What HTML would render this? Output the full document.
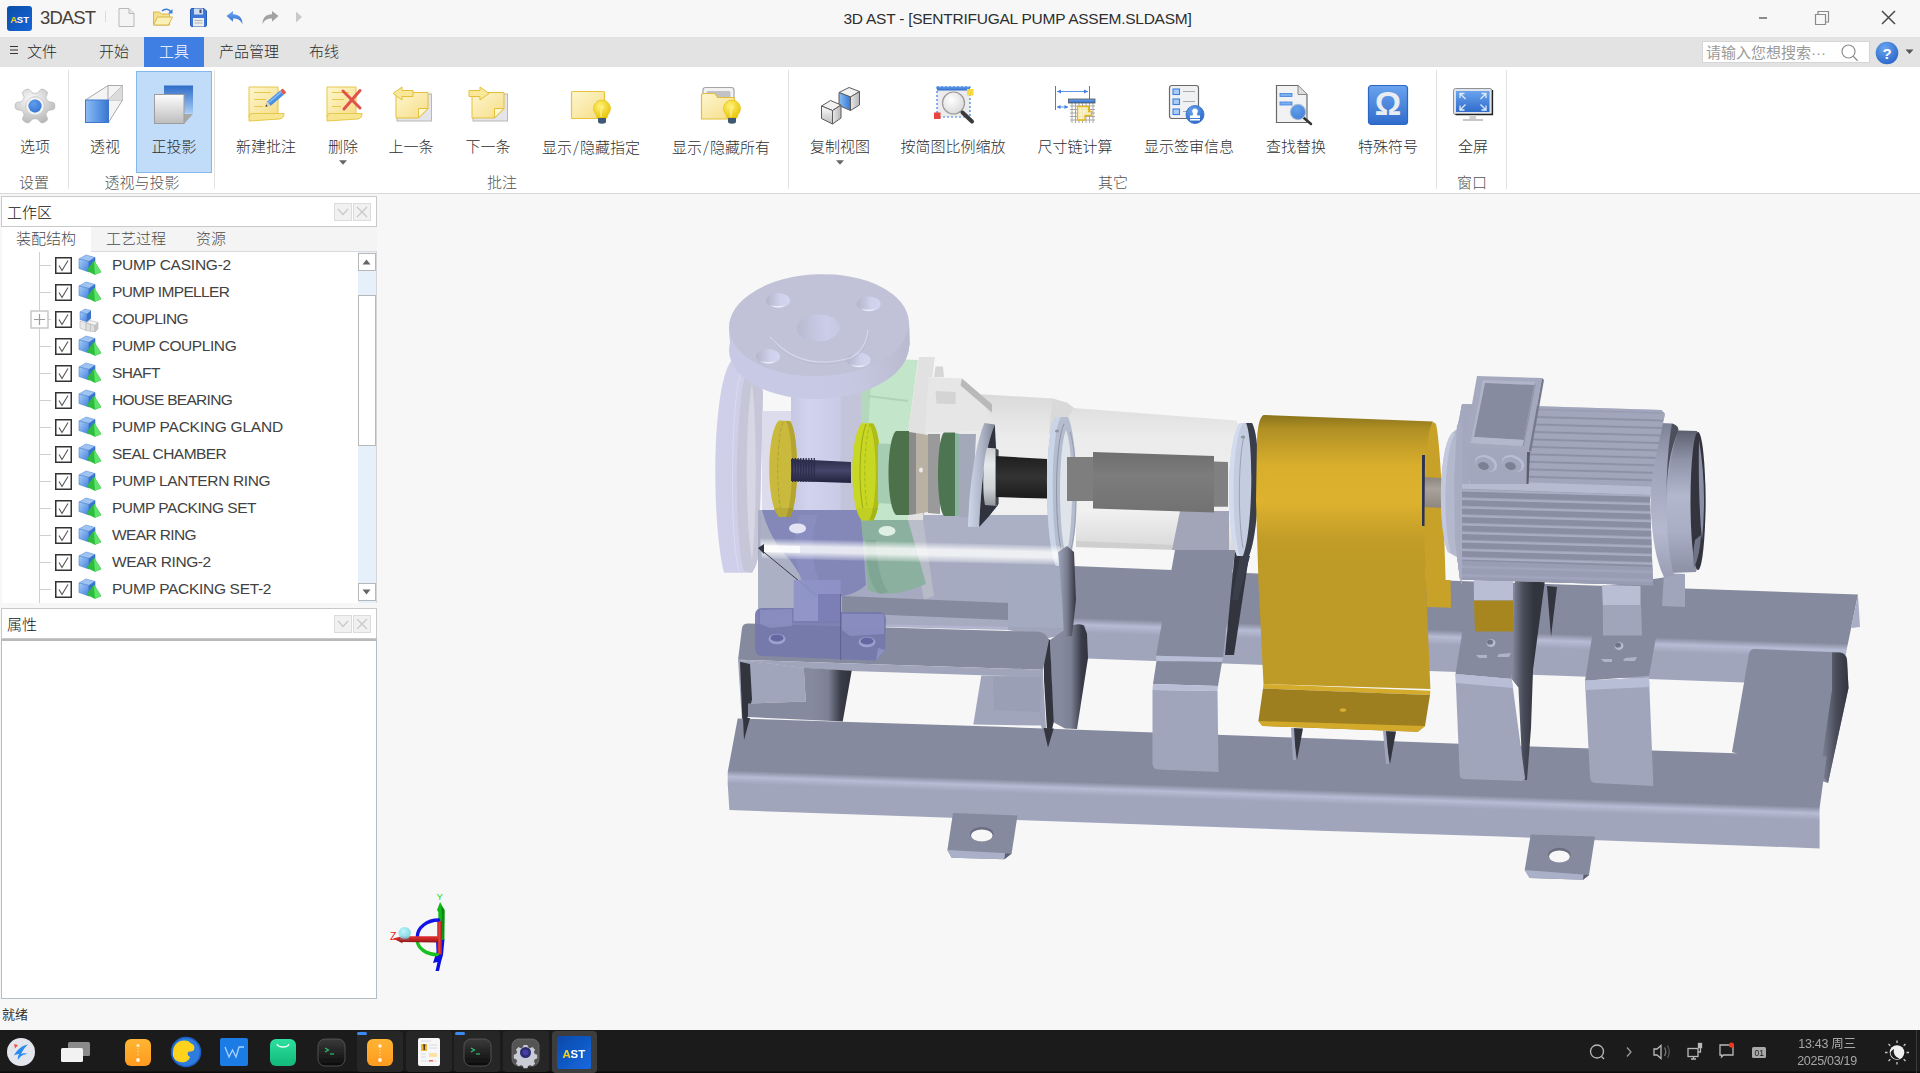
<!DOCTYPE html>
<html lang="zh-CN">
<head>
<meta charset="utf-8">
<title>3D AST - [SENTRIFUGAL PUMP ASSEM.SLDASM]</title>
<style>
*{box-sizing:border-box;margin:0;padding:0}
html,body{width:1920px;height:1073px;overflow:hidden;background:#f7f7f7}
body{font-family:"Liberation Sans","Noto Sans CJK SC",sans-serif;color:#333;position:relative;font-size:15px}
.abs{position:absolute}
#titlebar{left:0;top:0;width:1920px;height:37px;background:#f7f7f7}
#menubar{left:0;top:37px;width:1920px;height:30px;background:#e3e3e3}
#ribbon{left:0;top:67px;width:1920px;height:127px;background:#fff;border-bottom:1px solid #d9d9d9}
.tab{position:absolute;top:0;height:30px;line-height:30px;font-size:15px;font-weight:300;color:#2c2c2c;text-align:center;white-space:nowrap}
.tab.on{background:#3f7fe4;color:#fff}
.rb{position:absolute;top:77px;height:20px;line-height:20px;font-size:15px;font-weight:300;color:#2e2e2e;text-align:center;white-space:nowrap;transform:translateX(-50%)}
.grp{position:absolute;top:172.500px;height:20px;line-height:20px;font-size:15px;font-weight:300;color:#555;text-align:center;white-space:nowrap;transform:translateX(-50%)}
.sep{position:absolute;top:70px;width:1px;height:119px;background:#e2e2e2}
.ico{position:absolute}
#left{left:0;top:195px;width:378px;height:805px;background:#f7f7f7}
.ptitle{position:absolute;left:1px;width:376px;height:31px;background:#fff;border:1px solid #c9c9c9;font-size:15px;font-weight:300;line-height:31px;padding-left:5px;color:#111}
.pbtn{position:absolute;top:5px;width:17px;height:17px;background:#f1f1f1;border:1px solid #dcdcdc}
.trow{position:absolute;left:112px;height:27px;line-height:27px;font-size:15.5px;color:#424242;white-space:nowrap;letter-spacing:0px}
#view{left:378px;top:195px;width:1542px;height:805px;background:#f7f7f7;overflow:hidden}
#status{left:0;top:1000px;width:1920px;height:30px;background:#f7f7f7;font-size:13px;line-height:30px;padding-left:2px;color:#333}
#taskbar{left:0;top:1030px;width:1920px;height:43px;background:#1b1b1b}
</style>
</head>
<body>
<!-- ===== title bar ===== -->
<div id="titlebar" class="abs">
  <svg class="ico" style="left:7px;top:6px" width="25" height="25" viewBox="0 0 25 25">
    <defs><linearGradient id="lg0" x1="0" y1="0" x2="1" y2="1"><stop offset="0" stop-color="#0a4ea8"/><stop offset="1" stop-color="#1565d8"/></linearGradient></defs>
    <rect width="25" height="25" rx="3" fill="url(#lg0)"/>
    <text x="3.2" y="17" font-family="Liberation Sans,sans-serif" font-weight="bold" font-size="9.5" fill="#f7d21c">A</text>
    <text x="9.8" y="17" font-family="Liberation Sans,sans-serif" font-weight="bold" font-size="9.5" fill="#fff">ST</text>
  </svg>
  <div class="abs" style="left:40px;top:6px;font-size:18.500px;line-height:24px;color:#4a4038;letter-spacing:-0.9px">3DAST</div>
  <div class="abs" style="left:105px;top:11px;width:1px;height:11px;background:#dcdcdc"></div>
  <!-- new doc -->
  <svg class="ico" style="left:117px;top:7px" width="20" height="21" viewBox="0 0 20 21">
    <path d="M2 1.5h10l5 5v13H2z" fill="#f4f4f4" stroke="#b9b9b9"/><path d="M12 1.5v5h5" fill="#e6e6e6" stroke="#b9b9b9"/>
  </svg>
  <!-- open -->
  <svg class="ico" style="left:151px;top:7px" width="24" height="21" viewBox="0 0 24 21">
    <path d="M2.500 5h6l2 2h8v11h-16z" fill="#f5e08c" stroke="#d8b84e"/><path d="M2.500 18l4-8h15l-4 8z" fill="#fbf0b8" stroke="#d8b84e"/>
    <path d="M11 4c3-3 7-2 9 1" fill="none" stroke="#3d7fd6" stroke-width="1.5"/><path d="M21.5 2v4.5h-4.5z" fill="#3d7fd6"/>
  </svg>
  <!-- save -->
  <svg class="ico" style="left:189px;top:7px" width="19" height="21" viewBox="0 0 19 21">
    <path d="M1.5 3c0-1 .5-1.500 1.500-1.500h12l2.500 2.500v14c0 1-.5 1.500-1.500 1.500h-13c-1 0-1.500-.5-1.500-1.500z" fill="#3d78d8" stroke="#2a5cb6"/>
    <rect x="5" y="1.500" width="9" height="6" fill="#cfdcf2"/><rect x="10.500" y="2.500" width="2" height="3.500" fill="#3c4a66"/>
    <rect x="4" y="11" width="11" height="8.500" fill="#ededed"/><path d="M5.500 13.500h8M5.500 16h8" stroke="#b3b3b3"/>
  </svg>
  <!-- undo -->
  <svg class="ico" style="left:225px;top:9px" width="20" height="17" viewBox="0 0 20 17">
    <defs><linearGradient id="gUndo" x1="0" y1="0" x2="0" y2="1"><stop offset="0" stop-color="#6ea8f2"/><stop offset="1" stop-color="#2c68cc"/></linearGradient></defs><path d="M1.500 7L8 2v3.300c6 0 9.500 3.500 9.500 10c-2-4.300-4.500-5.800-9.500-5.800v3.300z" fill="url(#gUndo)"/>
  </svg>
  <!-- redo -->
  <svg class="ico" style="left:260px;top:9px" width="20" height="17" viewBox="0 0 20 17">
    <path d="M18.500 7L12 2v3.300c-6 0-9.500 3.500-9.500 10c2-4.300 4.500-5.800 9.500-5.800v3.300z" fill="#a2a2a2"/>
  </svg>
  <svg class="ico" style="left:295px;top:11px" width="8" height="12" viewBox="0 0 8 12"><path d="M1 0.500l6 5.500l-6 5.500z" fill="#c9c9c9"/></svg>
  <div class="abs" style="left:0;top:7px;width:2035px;text-align:center;font-size:15.500px;line-height:24px;color:#2e2e2e;letter-spacing:-0.25px">3D AST - [SENTRIFUGAL PUMP ASSEM.SLDASM]</div>
  <!-- window controls -->
  <div class="abs" style="left:1759px;top:17px;width:8px;height:1.500px;background:#8a8a8a"></div>
  <svg class="ico" style="left:1814px;top:10px" width="16" height="16" viewBox="0 0 16 16"><path d="M1.500 4.500h10v10h-10z" fill="none" stroke="#8a8a8a" stroke-width="1.200"/><path d="M4 4.500v-3h10.500v10.500h-3" fill="none" stroke="#8a8a8a" stroke-width="1.200"/></svg>
  <svg class="ico" style="left:1881px;top:10px" width="15" height="15" viewBox="0 0 15 15"><path d="M1 1l13 13M14 1l-13 13" stroke="#4a4a4a" stroke-width="1.500"/></svg>
</div>

<!-- ===== menu bar ===== -->
<div id="menubar" class="abs">
  <svg class="ico" style="left:9px;top:8px" width="10" height="10" viewBox="0 0 10 10"><path d="M1 1.500h8M1 5h8M1 8.500h8" stroke="#333" stroke-width="1.100"/></svg>
  <div class="tab" style="left:26px;width:32px;color:#1c1c1c">文件</div>
  <div class="tab" style="left:98px;width:32px">开始</div>
  <div class="tab on" style="left:144px;width:60px">工具</div>
  <div class="tab" style="left:218px;width:62px">产品管理</div>
  <div class="tab" style="left:308px;width:32px">布线</div>
  <div class="abs" style="left:1702px;top:4px;width:168px;height:22px;background:#fff;border:1px solid #d6d6d6;font-size:15px;line-height:21px;padding-left:3px;color:#9a9a9a;white-space:nowrap;overflow:hidden">请输入您想搜索···</div>
  <svg class="ico" style="left:1840px;top:6px" width="20" height="20" viewBox="0 0 20 20"><circle cx="8.500" cy="8.500" r="6.500" fill="none" stroke="#8d8d8d" stroke-width="1.200"/><path d="M13.200 13.200l4.500 4.500" stroke="#8d8d8d" stroke-width="1.300"/></svg>
  <svg class="ico" style="left:1875px;top:4px" width="24" height="24" viewBox="0 0 24 24">
    <defs><radialGradient id="rg1" cx="0.400" cy="0.300" r="0.800"><stop offset="0" stop-color="#6aa6f0"/><stop offset="1" stop-color="#2460c4"/></radialGradient></defs>
    <circle cx="12" cy="12" r="11.300" fill="url(#rg1)"/><text x="12" y="17.500" text-anchor="middle" font-family="Liberation Sans,sans-serif" font-weight="bold" font-size="15" fill="#fff">?</text>
  </svg>
  <svg class="ico" style="left:1905px;top:12px" width="9" height="6" viewBox="0 0 9 6"><path d="M0.500 0.500h8l-4 4.500z" fill="#555"/></svg>
</div>
<!-- ===== ribbon ===== -->
<div id="ribbon" class="abs"></div>
<svg width="0" height="0" style="position:absolute">
  <defs>
    <linearGradient id="gNote" x1="0" y1="0" x2="1" y2="1"><stop offset="0" stop-color="#fdf6cf"/><stop offset="1" stop-color="#f6dd85"/></linearGradient>
    <linearGradient id="gGrey" x1="0" y1="0" x2="0" y2="1"><stop offset="0" stop-color="#fdfdfd"/><stop offset="1" stop-color="#bdbdbd"/></linearGradient>
    <linearGradient id="gGreyH" x1="0" y1="0" x2="1" y2="0"><stop offset="0" stop-color="#e9e9e9"/><stop offset="1" stop-color="#b5b5b5"/></linearGradient>
    <linearGradient id="gBlue" x1="0" y1="0" x2="1" y2="0"><stop offset="0" stop-color="#8ebcf2"/><stop offset="0.500" stop-color="#5f9be6"/><stop offset="1" stop-color="#3a75cf"/></linearGradient>
    <linearGradient id="gBlueV" x1="0" y1="0" x2="0" y2="1"><stop offset="0" stop-color="#2d6cc8"/><stop offset="1" stop-color="#a9cdf6"/></linearGradient>
    <linearGradient id="gBlueB" x1="0" y1="0" x2="0" y2="1"><stop offset="0" stop-color="#6aa3ee"/><stop offset="1" stop-color="#2f6ccb"/></linearGradient>
    <radialGradient id="gBulb" cx="0.400" cy="0.350" r="0.700"><stop offset="0" stop-color="#fff27a"/><stop offset="1" stop-color="#e8c400"/></radialGradient>
    <radialGradient id="gGear" cx="0.400" cy="0.300" r="0.900"><stop offset="0" stop-color="#fafafa"/><stop offset="1" stop-color="#a8a8a8"/></radialGradient>
    <radialGradient id="gLens" cx="0.400" cy="0.350" r="0.700"><stop offset="0" stop-color="#ffffff"/><stop offset="1" stop-color="#d9d9d9"/></radialGradient>
    <g id="bulb">
      <path d="M0 -12a8.500 8.500 0 0 1 8.500 8.500c0 4-3 5.500-3.500 9.500h-10c-.5-4-3.500-5.500-3.500-9.500a8.500 8.500 0 0 1 8.500-8.500z" fill="url(#gBulb)" stroke="#e3c010" stroke-width=".6"/>
      <path d="M-4 6h8v3.500a4 2.200 0 0 1-8 0z" fill="#3f5873"/>
      <path d="M1.500-6l-2.500 4v7" stroke="#fff8b0" stroke-width="1" fill="none"/>
    </g>
    <g id="note">
      <path d="M1 1h29v27h-27q-2 0-2 3z" fill="url(#gNote)" stroke="#e6c84a" stroke-width="1"/>
      <path d="M1 31q0-3.500 3.500-3.500h31.500q0 5-4.500 5.500l-30.500 2z" fill="#f8e58f" stroke="#e6c84a" stroke-width="1"/>
      <path d="M6 6.500h17M6 13.500h12M6 20.500h9" stroke="#e6c84a" stroke-width="1"/>
    </g>
    <path id="ddarrow" d="M0 0h7l-3.500 4z" fill="#666"/>
  </defs>
</svg>
<div class="abs" style="left:136px;top:71px;width:76px;height:102px;background:#c1dcf8;border:1px solid #84b8ee"></div>
<div class="sep" style="left:68px"></div><div class="sep" style="left:214px"></div><div class="sep" style="left:788px"></div><div class="sep" style="left:1436px"></div><div class="sep" style="left:1506px"></div>

<!-- gear -->
<svg class="ico" style="left:13px;top:85px" width="44" height="42" viewBox="-22 -21 44 42">
  <path id="gearp" fill="url(#gGear)" stroke="#b4b4b4" stroke-width=".7" stroke-linejoin="round" d="M19.8,0.0 L19.8,1.0 L19.6,1.9 L19.2,2.8 L18.2,3.6 L16.2,4.0 L14.2,4.3 L13.2,4.7 L12.7,5.3 L12.3,5.8 L12.0,6.4 L11.6,7.0 L11.2,7.6 L11.0,8.3 L11.1,9.3 L11.9,11.0 L12.5,12.9 L12.2,14.1 L11.6,14.8 L10.8,15.4 L9.9,15.9 L9.0,16.4 L8.0,16.7 L7.0,16.9 L5.8,16.5 L4.3,15.1 L3.1,13.6 L2.2,13.0 L1.5,12.9 L0.7,12.8 L0.0,12.8 L-0.7,12.8 L-1.5,12.9 L-2.2,13.0 L-3.1,13.6 L-4.3,15.1 L-5.8,16.5 L-7.0,16.9 L-8.0,16.7 L-9.0,16.4 L-9.9,15.9 L-10.8,15.4 L-11.6,14.8 L-12.2,14.1 L-12.5,12.9 L-11.9,11.0 L-11.1,9.3 L-11.0,8.3 L-11.2,7.6 L-11.6,7.0 L-12.0,6.4 L-12.3,5.8 L-12.7,5.3 L-13.2,4.7 L-14.2,4.3 L-16.2,4.0 L-18.2,3.6 L-19.2,2.8 L-19.6,1.9 L-19.8,1.0 L-19.8,0.0 L-19.8,-1.0 L-19.6,-1.9 L-19.2,-2.8 L-18.2,-3.6 L-16.2,-4.0 L-14.2,-4.3 L-13.2,-4.7 L-12.7,-5.3 L-12.3,-5.8 L-12.0,-6.4 L-11.6,-7.0 L-11.2,-7.6 L-11.0,-8.3 L-11.1,-9.3 L-11.9,-11.0 L-12.5,-12.9 L-12.2,-14.1 L-11.6,-14.8 L-10.8,-15.4 L-9.9,-15.9 L-9.0,-16.4 L-8.0,-16.7 L-7.0,-16.9 L-5.8,-16.5 L-4.3,-15.1 L-3.1,-13.6 L-2.2,-13.0 L-1.5,-12.9 L-0.7,-12.8 L-0.0,-12.8 L0.7,-12.8 L1.5,-12.9 L2.2,-13.0 L3.1,-13.6 L4.3,-15.1 L5.8,-16.5 L7.0,-16.9 L8.0,-16.7 L9.0,-16.4 L9.9,-15.9 L10.8,-15.4 L11.6,-14.8 L12.2,-14.1 L12.5,-12.9 L11.9,-11.0 L11.1,-9.3 L11.0,-8.3 L11.2,-7.6 L11.6,-7.0 L12.0,-6.4 L12.3,-5.8 L12.7,-5.3 L13.2,-4.7 L14.2,-4.3 L16.2,-4.0 L18.2,-3.6 L19.2,-2.8 L19.6,-1.9 L19.8,-1.0Z"/>
  <circle r="9.300" fill="#f2f2f2" stroke="#c4c4c4" stroke-width=".8"/>
  <circle r="6.500" fill="#4d8fe6"/><circle r="6.500" fill="url(#rg1)" opacity=".6"/>
</svg>
<!-- perspective -->
<svg class="ico" style="left:84px;top:84px" width="40" height="40" viewBox="0 0 40 40">
  <path d="M1.500 16L24 1.500H38.500V16L24.500 38.500H1.500z" fill="#f4f4f4" stroke="#a9a9a9" stroke-width="1"/>
  <path d="M24 1.500V16H38.500" fill="none" stroke="#a9a9a9"/><path d="M24 16L38.500 1.500" stroke="#a9a9a9"/>
  <path d="M24 16H38.500V1.500z" fill="#dcdcdc"/>
  <rect x="1.500" y="16" width="23" height="22.500" fill="url(#gBlue)" stroke="#3e78cc"/>
</svg>
<!-- ortho -->
<svg class="ico" style="left:153px;top:84px" width="42" height="42" viewBox="0 0 42 42">
  <rect x="11" y="1.500" width="29" height="28" fill="url(#gBlueV)"/>
  <path d="M31 30h9l-9 10z" fill="#a8a8a8"/>
  <rect x="1.500" y="10.500" width="29.500" height="29" fill="url(#gGrey)" stroke="#9d9d9d" stroke-width="1"/>
</svg>
<!-- new note -->
<svg class="ico" style="left:248px;top:86px" width="40" height="38" viewBox="0 0 40 38">
  <use href="#note"/>
  <g transform="translate(17.500,20.500) rotate(-40)"><path d="M0 0l4.500-2.800h17v5.600h-17z" fill="#4a90e2"/><path d="M0 0l4.500-2.800v5.600z" fill="#f0cfa0"/><path d="M0 0l1.800-1.100v2.200z" fill="#222"/><rect x="21.500" y="-2.800" width="3.500" height="5.600" rx="1.200" fill="#e8584d"/><path d="M4.500 -1h17" stroke="#86bbf5" stroke-width="1.500"/></g>
</svg>
<!-- delete -->
<svg class="ico" style="left:326px;top:86px" width="40" height="38" viewBox="0 0 40 38">
  <use href="#note"/>
  <path d="M17 5l17 17M34 4.500L18 23" stroke="#e2524c" stroke-width="3" stroke-linecap="round"/>
</svg>
<svg class="ico" style="left:339px;top:160px" width="8" height="5" viewBox="0 0 7 4"><use href="#ddarrow"/></svg>
<!-- prev -->
<svg class="ico" style="left:392px;top:86px" width="42" height="38" viewBox="0 0 42 38">
  <rect x="5" y="8" width="34.500" height="27" fill="#e3e5ea" stroke="#b8b8b8"/>
  <path d="M4 6.500h32v16l-9.500 9.500h-22.500z" fill="url(#gNote)" stroke="#e3bf3a" stroke-width="1"/>
  <path d="M26.500 32v-9.500h9.500z" fill="#fdf6cf" stroke="#e3bf3a"/>
  <path d="M1 7.500l9-6.500v3.500h11v6h-11v3.500z" fill="#fae89a" stroke="#e3bf3a"/>
</svg>
<!-- next -->
<svg class="ico" style="left:468px;top:86px" width="42" height="38" viewBox="0 0 42 38">
  <rect x="5" y="8" width="34.500" height="27" fill="#e3e5ea" stroke="#b8b8b8"/>
  <path d="M4 6.500h32v16l-9.500 9.500h-22.500z" fill="url(#gNote)" stroke="#e3bf3a" stroke-width="1"/>
  <path d="M26.500 32v-9.500h9.500z" fill="#fdf6cf" stroke="#e3bf3a"/>
  <path d="M21 7.500l-9-6.500v3.500h-11v6h11v3.500z" fill="#fae89a" stroke="#e3bf3a"/>
</svg>
<!-- show/hide specified -->
<svg class="ico" style="left:570px;top:86px" width="44" height="40" viewBox="0 0 44 40">
  <rect x="1.500" y="5.500" width="33" height="27" rx="1" fill="url(#gNote)" stroke="#e6c440" stroke-width="1.200"/>
  <use href="#bulb" x="32" y="26"/>
</svg>
<!-- show/hide all -->
<svg class="ico" style="left:700px;top:86px" width="44" height="40" viewBox="0 0 44 40">
  <rect x="3" y="1.500" width="31" height="20" rx="2.500" fill="#f2f2f2" stroke="#a5a5a5" stroke-width="1.200"/><rect x="6.500" y="5" width="24" height="8" rx="1.500" fill="#c2c2c6"/>
  <path d="M1.500 9.500q0-2 2-2h10q2 0 3 2l1 2h15.500q1.500 0 1.500 1.500v20h-33z" fill="url(#gNote)" stroke="#e0be3a" stroke-width="1.200"/>
  <use href="#bulb" x="32" y="26"/>
</svg>
<!-- copy view -->
<svg class="ico" style="left:820px;top:86px" width="42" height="40" viewBox="0 0 42 40">
  <g stroke="#5c5c5c" stroke-width="1" stroke-linejoin="round">
    <path d="M19 6.500l10-5l10.500 4l-9 5.500z" fill="#f2f2f2"/><path d="M19 6.500l11.500 4.500v13.500l-11.500-5z" fill="url(#gBlue)"/><path d="M30.500 11l9-5.500v13.500l-9 5.500z" fill="url(#gGreyH)"/>
    <path d="M1.500 20l9-5.500l10.500 4.500l-8.500 5.500z" fill="#f2f2f2"/><path d="M1.500 20l11 4.500v13.500l-11-5.500z" fill="url(#gGrey)"/><path d="M12.500 24.500l8.500-5.500v13l-8.500 6z" fill="url(#gGreyH)"/>
  </g>
</svg>
<svg class="ico" style="left:836px;top:160px" width="8" height="5" viewBox="0 0 7 4"><use href="#ddarrow"/></svg>
<!-- zoom by sketch scale -->
<svg class="ico" style="left:933px;top:85px" width="42" height="42" viewBox="0 0 42 42">
  <rect x="4" y="2" width="33" height="30" fill="#ececec"/>
  <rect x="4" y="1.500" width="33" height="4" fill="url(#gBlueB)"/>
  <rect x="4" y="2" width="33" height="30" fill="none" stroke="#3f7fe0" stroke-width="1.200" stroke-dasharray="2 2"/>
  <rect x="34" y="4" width="6.500" height="6.500" fill="#f6d840"/><rect x="1" y="27.500" width="6.500" height="6.500" fill="#e8453f"/>
  <circle cx="20.500" cy="18" r="11" fill="url(#gLens)" stroke="#9a9a9a" stroke-width="1.200"/>
  <path d="M29.500 27.500l9.500 9" stroke="#3a3a3a" stroke-width="4" stroke-linecap="round"/>
</svg>
<!-- dimension chain -->
<svg class="ico" style="left:1053px;top:85px" width="44" height="42" viewBox="0 0 44 42">
  <path d="M2.500 1v24M36.500 1v13" stroke="#3f7fe0" stroke-width="1"/><path d="M4 6.500h31M4 22h11" stroke="#5b95e8" stroke-width="1"/>
  <path d="M4 6.500l4-2v4zM35 6.500l-4-2v4zM4 22l3.500-2v4zM15 22l-3.500-2v4z" fill="#3f7fe0"/>
  <g stroke="#9f9f9f" stroke-width=".9"><path d="M17 21h25M17 24.500h25M17 28h25M17 31.500h25M17 35h25"/><path d="M19 18v20M22.500 18v20M26 18v20M29.500 18v20M33 18v20M36.500 18v20M40 18v20"/></g>
  <path d="M24.500 21.500h11v5h3v4h-6.500v4.500h-7.500z" fill="#fdf3c0" fill-opacity=".85" stroke="#e3b820" stroke-width="1.300"/>
  <rect x="15.500" y="14" width="26.500" height="4" fill="url(#gBlueB)" stroke="#555" stroke-width=".8"/>
</svg>
<!-- sign info -->
<svg class="ico" style="left:1168px;top:84px" width="40" height="42" viewBox="0 0 40 42">
  <rect x="1.500" y="1.500" width="29" height="33" rx="2.500" fill="#f0f1f3" stroke="#6a6a6a" stroke-width="1.200"/>
  <g fill="#a9cdf6" stroke="#3f7fe0" stroke-width="1.100"><rect x="5" y="5" width="6.500" height="5.500"/><rect x="5" y="15" width="6.500" height="5.500"/><rect x="5" y="25" width="6.500" height="5.500"/></g>
  <path d="M15 7.500h12M15 17.500h12M15 27.500h5" stroke="#aaa" stroke-width="1.200"/>
  <circle cx="27" cy="30.500" r="9" fill="url(#rg1)" stroke="#2e68c4" stroke-width=".8"/>
  <path d="M27 24.500a2.800 2.800 0 0 1 1.800 5l.7 2h2.500v2.500h-10v-2.500h2.500l.7-2a2.800 2.800 0 0 1 1.800-5zM22 35h10v1.500h-10z" fill="#fff"/>
</svg>
<!-- find replace -->
<svg class="ico" style="left:1275px;top:84px" width="40" height="42" viewBox="0 0 40 42">
  <path d="M1.500 1.500h21.500l9 9v28h-30.500z" fill="#f1f2f4" stroke="#6a6a6a" stroke-width="1.200"/><path d="M23 1.500v9h9" fill="#dcdcdc" stroke="#8a8a8a"/>
  <rect x="5" y="9.500" width="12" height="3" fill="#7fb0ee" stroke="#3f7fe0" stroke-width=".8"/><rect x="5" y="18" width="12" height="3" fill="#7fb0ee" stroke="#3f7fe0" stroke-width=".8"/>
  <path d="M29 34l7 6" stroke="#333" stroke-width="2.500" stroke-linecap="round"/>
  <circle cx="23" cy="28" r="7.500" fill="#5e9ae8" stroke="#b9c7da" stroke-width="1.500"/><circle cx="23" cy="28" r="7.500" fill="url(#rg1)" opacity=".5"/>
</svg>
<!-- omega -->
<svg class="ico" style="left:1367px;top:84px" width="42" height="42" viewBox="0 0 42 42">
  <rect x="1.500" y="1.500" width="39" height="39" rx="3" fill="url(#gBlueB)" stroke="#2c66c6" stroke-width="1.200"/>
  <text x="21" y="31" text-anchor="middle" font-family="Liberation Sans,sans-serif" font-weight="bold" font-size="33" fill="#e8ecf3">Ω</text>
</svg>
<!-- fullscreen -->
<svg class="ico" style="left:1452px;top:87px" width="42" height="36" viewBox="0 0 42 36">
  <rect x="1.500" y="1.500" width="38.500" height="26" rx="2" fill="#dfe3e8" stroke="#8d9399" stroke-width="1"/>
  <path d="M40.500 3v24.500h-37" fill="none" stroke="#222" stroke-width="1.300"/>
  <rect x="4" y="4" width="33.500" height="21" fill="url(#gBlueB)"/>
  <g stroke="#dfeaf8" stroke-width="1.300" fill="none"><path d="M13.500 12l-5-5M8 11v-4.500h4.500"/><path d="M28.500 12l5-5M34 11v-4.500h-4.500"/><path d="M13.500 17.500l-5 5M8 18.500v4.500h4.500"/><path d="M28.500 17.500l5 5M34 18.500v4.500h-4.500"/></g>
  <rect x="17.500" y="28" width="6.500" height="4" fill="#d0d0d0"/><rect x="11" y="32" width="20" height="2" fill="#c6c6c6"/>
</svg>

<div class="rb" style="left:35px;top:136.500px">选项</div>
<div class="rb" style="left:105px;top:136.500px">透视</div>
<div class="rb" style="left:174px;top:136.500px">正投影</div>
<div class="rb" style="left:266px;top:136.500px">新建批注</div>
<div class="rb" style="left:343px;top:136.500px">删除</div>
<div class="rb" style="left:411px;top:136.500px">上一条</div>
<div class="rb" style="left:488px;top:136.500px">下一条</div>
<div class="rb" style="left:591px;top:136.500px">显示<span style="font-family:'Noto Sans CJK SC',sans-serif;margin:0 1px">/</span>隐藏指定</div>
<div class="rb" style="left:721px;top:136.500px">显示<span style="font-family:'Noto Sans CJK SC',sans-serif;margin:0 1px">/</span>隐藏所有</div>
<div class="rb" style="left:840px;top:136.500px">复制视图</div>
<div class="rb" style="left:953px;top:136.500px">按简图比例缩放</div>
<div class="rb" style="left:1075px;top:136.500px">尺寸链计算</div>
<div class="rb" style="left:1189px;top:136.500px">显示签审信息</div>
<div class="rb" style="left:1296px;top:136.500px">查找替换</div>
<div class="rb" style="left:1388px;top:136.500px">特殊符号</div>
<div class="rb" style="left:1473px;top:136.500px">全屏</div>
<div class="grp" style="left:34px">设置</div>
<div class="grp" style="left:142px">透视与投影</div>
<div class="grp" style="left:502px">批注</div>
<div class="grp" style="left:1113px">其它</div>
<div class="grp" style="left:1472px">窗口</div>
<!-- ===== left panel ===== -->
<div id="left" class="abs"></div>
<svg width="0" height="0" style="position:absolute"><defs>
<linearGradient id="cubeF" x1="0" y1="0" x2="1" y2="1"><stop offset="0" stop-color="#a9cdf7"/><stop offset="1" stop-color="#3f7fdc"/></linearGradient>
<g id="part">
  <path d="M1 5l7-4l9 2.500l-6 4z" fill="#9fc4f1" stroke="#5b8fd6" stroke-width=".6"/>
  <path d="M1 5l10 2.500v10.500l-10-3.500z" fill="url(#cubeF)" stroke="#4d84d2" stroke-width=".6"/>
  <path d="M11 7.500l6-4v10l-6 4.500z" fill="#3a73cc" stroke="#3a73cc" stroke-width=".6"/>
  <path d="M16 7l7 11l-6 2.500l-8-4z" fill="#39d24a" stroke="#24b136" stroke-width=".6"/>
  <path d="M16 7l1 13.500l-8-4z" fill="#2ebc3f"/>
  <path d="M16 7l7 11l-6 2.500z" fill="#5fe36a"/>
</g>
<g id="asm">
  <path d="M2 4l5-3l6 1.500l-4 3.500z" fill="#9fc4f1" stroke="#5b8fd6" stroke-width=".5"/>
  <path d="M2 4l7 2v8l-7-2.500z" fill="url(#cubeF)" stroke="#4d84d2" stroke-width=".5"/>
  <path d="M9 6l4-3.500v8l-4 3.500z" fill="#3a73cc"/>
  <path d="M2 13l6 2v7.500l-6-2.500z" fill="#e9e9e9" stroke="#b5b5b5" stroke-width=".6"/>
  <path d="M8 15l4-2.500l8 2l-3 3z" fill="#f4f4f4" stroke="#b5b5b5" stroke-width=".6"/>
  <path d="M8 15l9 2.500v6.500l-9-1.500z" fill="#dedede" stroke="#b5b5b5" stroke-width=".6"/>
  <path d="M17 17.500l3-3v6.500l-3 3z" fill="#c6c6c6" stroke="#b5b5b5" stroke-width=".6"/>
  <path d="M12.500 16.200v6.800" stroke="#b5b5b5" stroke-width=".6"/>
</g>
<g id="chk"><rect x=".75" y=".75" width="15.500" height="15.500" fill="#fff" stroke="#333" stroke-width="1.500"/><path d="M4 8.500l3 5l6-10" fill="none" stroke="#555" stroke-width="1.100"/></g>
<g id="pbx"><rect x=".5" y=".5" width="17" height="17" fill="#f1f1f1" stroke="#dcdcdc"/></g>
</defs></svg>
<div class="ptitle" style="top:196px">工作区</div>
<svg class="ico" style="left:334px;top:203px" width="37" height="18" viewBox="0 0 37 18"><use href="#pbx"/><use href="#pbx" x="19"/><path d="M4 6l5 5.500l5-5.500" fill="none" stroke="#c8c8c8" stroke-width="1.200"/><path d="M23 4l10 10M33 4l-10 10" stroke="#c8c8c8" stroke-width="1.200"/></svg>
<div class="abs" style="left:2px;top:227px;width:375px;height:25px;background:#f4f4f4;border-bottom:1px solid #dadada"></div>
<div class="abs" style="left:2px;top:227px;width:89px;height:25px;background:#fff"></div>
<div class="abs" style="left:46px;top:229px;transform:translateX(-50%);font-size:15px;font-weight:300;line-height:20px;color:#4a4a4a;white-space:nowrap">装配结构</div>
<div class="abs" style="left:136px;top:229px;transform:translateX(-50%);font-size:15px;font-weight:300;line-height:20px;color:#4a4a4a;white-space:nowrap">工艺过程</div>
<div class="abs" style="left:211px;top:229px;transform:translateX(-50%);font-size:15px;font-weight:300;line-height:20px;color:#4a4a4a;white-space:nowrap">资源</div>
<div class="abs" style="left:2px;top:252px;width:375px;height:351px;background:#fff;border-right:1px solid #d5d5d5;overflow:hidden"></div>
<div class="abs" style="left:39px;top:252px;width:1px;height:351px;background:#cfcfcf"></div>
<div class="abs" style="left:39px;top:265px;width:12px;height:1px;background:#cfcfcf"></div>
<svg class="ico" style="left:55px;top:257px" width="17" height="17"><use href="#chk"/></svg>
<svg class="ico" style="left:78px;top:254px" width="24" height="24" viewBox="0 0 24 24"><use href="#part"/></svg>
<div class="trow" style="top:251px;letter-spacing:-0.231px">PUMP CASING-2</div>
<div class="abs" style="left:39px;top:292px;width:12px;height:1px;background:#cfcfcf"></div>
<svg class="ico" style="left:55px;top:284px" width="17" height="17"><use href="#chk"/></svg>
<svg class="ico" style="left:78px;top:281px" width="24" height="24" viewBox="0 0 24 24"><use href="#part"/></svg>
<div class="trow" style="top:278px;letter-spacing:-0.623px">PUMP IMPELLER</div>
<div class="abs" style="left:39px;top:319px;width:12px;height:1px;background:#cfcfcf"></div>
<svg class="ico" style="left:55px;top:311px" width="17" height="17"><use href="#chk"/></svg>
<svg class="ico" style="left:78px;top:308px" width="24" height="24" viewBox="0 0 24 24"><use href="#asm"/></svg>
<div class="trow" style="top:305px;letter-spacing:-0.625px">COUPLING</div>
<div class="abs" style="left:39px;top:346px;width:12px;height:1px;background:#cfcfcf"></div>
<svg class="ico" style="left:55px;top:338px" width="17" height="17"><use href="#chk"/></svg>
<svg class="ico" style="left:78px;top:335px" width="24" height="24" viewBox="0 0 24 24"><use href="#part"/></svg>
<div class="trow" style="top:332px;letter-spacing:-0.423px">PUMP COUPLING</div>
<div class="abs" style="left:39px;top:373px;width:12px;height:1px;background:#cfcfcf"></div>
<svg class="ico" style="left:55px;top:365px" width="17" height="17"><use href="#chk"/></svg>
<svg class="ico" style="left:78px;top:362px" width="24" height="24" viewBox="0 0 24 24"><use href="#part"/></svg>
<div class="trow" style="top:359px;letter-spacing:-0.600px">SHAFT</div>
<div class="abs" style="left:39px;top:400px;width:12px;height:1px;background:#cfcfcf"></div>
<svg class="ico" style="left:55px;top:392px" width="17" height="17"><use href="#chk"/></svg>
<svg class="ico" style="left:78px;top:389px" width="24" height="24" viewBox="0 0 24 24"><use href="#part"/></svg>
<div class="trow" style="top:386px;letter-spacing:-0.708px">HOUSE BEARING</div>
<div class="abs" style="left:39px;top:427px;width:12px;height:1px;background:#cfcfcf"></div>
<svg class="ico" style="left:55px;top:419px" width="17" height="17"><use href="#chk"/></svg>
<svg class="ico" style="left:78px;top:416px" width="24" height="24" viewBox="0 0 24 24"><use href="#part"/></svg>
<div class="trow" style="top:413px;letter-spacing:-0.239px">PUMP PACKING GLAND</div>
<div class="abs" style="left:39px;top:454px;width:12px;height:1px;background:#cfcfcf"></div>
<svg class="ico" style="left:55px;top:446px" width="17" height="17"><use href="#chk"/></svg>
<svg class="ico" style="left:78px;top:443px" width="24" height="24" viewBox="0 0 24 24"><use href="#part"/></svg>
<div class="trow" style="top:440px;letter-spacing:-0.558px">SEAL CHAMBER</div>
<div class="abs" style="left:39px;top:481px;width:12px;height:1px;background:#cfcfcf"></div>
<svg class="ico" style="left:55px;top:473px" width="17" height="17"><use href="#chk"/></svg>
<svg class="ico" style="left:78px;top:470px" width="24" height="24" viewBox="0 0 24 24"><use href="#part"/></svg>
<div class="trow" style="top:467px;letter-spacing:-0.347px">PUMP LANTERN RING</div>
<div class="abs" style="left:39px;top:508px;width:12px;height:1px;background:#cfcfcf"></div>
<svg class="ico" style="left:55px;top:500px" width="17" height="17"><use href="#chk"/></svg>
<svg class="ico" style="left:78px;top:497px" width="24" height="24" viewBox="0 0 24 24"><use href="#part"/></svg>
<div class="trow" style="top:494px;letter-spacing:-0.494px">PUMP PACKING SET</div>
<div class="abs" style="left:39px;top:535px;width:12px;height:1px;background:#cfcfcf"></div>
<svg class="ico" style="left:55px;top:527px" width="17" height="17"><use href="#chk"/></svg>
<svg class="ico" style="left:78px;top:524px" width="24" height="24" viewBox="0 0 24 24"><use href="#part"/></svg>
<div class="trow" style="top:521px;letter-spacing:-0.622px">WEAR RING</div>
<div class="abs" style="left:39px;top:562px;width:12px;height:1px;background:#cfcfcf"></div>
<svg class="ico" style="left:55px;top:554px" width="17" height="17"><use href="#chk"/></svg>
<svg class="ico" style="left:78px;top:551px" width="24" height="24" viewBox="0 0 24 24"><use href="#part"/></svg>
<div class="trow" style="top:548px;letter-spacing:-0.418px">WEAR RING-2</div>
<div class="abs" style="left:39px;top:589px;width:12px;height:1px;background:#cfcfcf"></div>
<svg class="ico" style="left:55px;top:581px" width="17" height="17"><use href="#chk"/></svg>
<svg class="ico" style="left:78px;top:578px" width="24" height="24" viewBox="0 0 24 24"><use href="#part"/></svg>
<div class="trow" style="top:575px;letter-spacing:-0.317px">PUMP PACKING SET-2</div>
<svg class="ico" style="left:30px;top:310px" width="19" height="19" viewBox="0 0 19 19"><rect x="1" y="1" width="17" height="17" fill="#fff" stroke="#c4c4c4" stroke-width="1.400"/><path d="M4 9.500h11M9.500 4v11" stroke="#9b9b9b" stroke-width="1.200"/></svg>
<div class="abs" style="left:358px;top:252px;width:18px;height:351px;background:#e6f0fb"></div>
<div class="abs" style="left:358px;top:253px;width:18px;height:18px;background:#fff;border:1px solid #b8b8b8"></div>
<div class="abs" style="left:358px;top:583px;width:18px;height:18px;background:#fff;border:1px solid #b8b8b8"></div>
<div class="abs" style="left:358px;top:295px;width:18px;height:151px;background:#fff;border:1px solid #b8b8b8"></div>
<svg class="ico" style="left:362px;top:259px" width="9" height="6" viewBox="0 0 9 6"><path d="M0.500 5.500h8l-4-5z" fill="#666"/></svg>
<svg class="ico" style="left:362px;top:589px" width="9" height="6" viewBox="0 0 9 6"><path d="M0.500 .5h8l-4 5z" fill="#666"/></svg>
<div class="ptitle" style="top:608px">属性</div>
<svg class="ico" style="left:334px;top:615px" width="37" height="18" viewBox="0 0 37 18"><use href="#pbx"/><use href="#pbx" x="19"/><path d="M4 6l5 5.500l5-5.500" fill="none" stroke="#c8c8c8" stroke-width="1.200"/><path d="M23 4l10 10M33 4l-10 10" stroke="#c8c8c8" stroke-width="1.200"/></svg>
<div class="abs" style="left:1px;top:639px;width:376px;height:360px;background:#fff;border:1px solid #b4bcc8;border-top:2px solid #b9b9b9"></div>
<div id="view" class="abs"></div>
<svg class="abs" style="left:378px;top:195px" width="1542" height="805" viewBox="378 195 1542 805">
<defs>
<linearGradient id="mGuard" gradientUnits="userSpaceOnUse" x1="0" y1="414" x2="0" y2="560"><stop offset="0" stop-color="#86711b"/><stop offset=".1" stop-color="#b08f24"/><stop offset=".35" stop-color="#d8ae2c"/><stop offset=".6" stop-color="#ddb22e"/><stop offset=".85" stop-color="#c29d27"/><stop offset="1" stop-color="#be9a26"/></linearGradient>
<linearGradient id="mShaftG" gradientUnits="userSpaceOnUse" x1="0" y1="452" x2="0" y2="512"><stop offset="0" stop-color="#6f6f6f"/><stop offset=".4" stop-color="#7c7c7c"/><stop offset="1" stop-color="#727272"/></linearGradient>
<linearGradient id="mShaftK" gradientUnits="userSpaceOnUse" x1="0" y1="456" x2="0" y2="498"><stop offset="0" stop-color="#1f1f1f"/><stop offset=".5" stop-color="#333"/><stop offset="1" stop-color="#1c1c1c"/></linearGradient>
<linearGradient id="mHouse" gradientUnits="userSpaceOnUse" x1="0" y1="395" x2="0" y2="560"><stop offset="0" stop-color="#dadada"/><stop offset=".25" stop-color="#ebebeb"/><stop offset=".7" stop-color="#f1f1f1"/><stop offset="1" stop-color="#d2d2d2"/></linearGradient>
<linearGradient id="mRing" x1="0" y1="0" x2="1" y2="0"><stop offset="0" stop-color="#cfd8ea"/><stop offset=".5" stop-color="#aeb6c8"/><stop offset="1" stop-color="#7f8696"/></linearGradient>
<linearGradient id="mLegShade" x1="0" y1="0" x2="1" y2="0"><stop offset="0" stop-color="#858a9e"/><stop offset=".55" stop-color="#4a4d5a"/><stop offset="1" stop-color="#32343e"/></linearGradient>
<linearGradient id="mLegShade2" x1="0" y1="0" x2="1" y2="0"><stop offset="0" stop-color="#858a9e"/><stop offset=".45" stop-color="#858a9e"/><stop offset=".8" stop-color="#3c3e4a"/><stop offset="1" stop-color="#32343e"/></linearGradient>
<linearGradient id="mFan" gradientUnits="userSpaceOnUse" x1="0" y1="430" x2="0" y2="575"><stop offset="0" stop-color="#5b5e6c"/><stop offset=".2" stop-color="#8d92a7"/><stop offset=".45" stop-color="#b2b7ce"/><stop offset=".7" stop-color="#a9aec5"/><stop offset="1" stop-color="#8a8fa4"/></linearGradient>
<linearGradient id="mBell" gradientUnits="userSpaceOnUse" x1="0" y1="405" x2="0" y2="585"><stop offset="0" stop-color="#6e7283"/><stop offset=".3" stop-color="#9ca1b7"/><stop offset=".7" stop-color="#b4b9d0"/><stop offset="1" stop-color="#9499ae"/></linearGradient>
<linearGradient id="mYel1" x1="0" y1="0" x2="1" y2="0"><stop offset="0" stop-color="#cdbd3e"/><stop offset="1" stop-color="#b4a42e"/></linearGradient>
<linearGradient id="mCasing" x1="0" y1="0" x2="1" y2="0"><stop offset="0" stop-color="#cfcfe8"/><stop offset="1" stop-color="#c0c0d8"/></linearGradient>
<linearGradient id="mThread" gradientUnits="userSpaceOnUse" x1="0" y1="459" x2="0" y2="482"><stop offset="0" stop-color="#2a2a48"/><stop offset=".5" stop-color="#45456a"/><stop offset="1" stop-color="#242440"/></linearGradient>
<pattern id="finsA" patternUnits="userSpaceOnUse" x="0" y="0" width="400" height="7.500" patternTransform="rotate(1.6)"><rect width="400" height="7.500" fill="#a1a6bc"/><rect y="5.500" width="400" height="1.800" fill="#8a8fa4"/></pattern>
<pattern id="finsB" patternUnits="userSpaceOnUse" x="0" y="0" width="400" height="8.500" patternTransform="rotate(1.6)"><rect width="400" height="8.500" fill="#898ea3"/><rect y="6" width="400" height="2.500" fill="#a8adc4"/></pattern>
</defs>

<linearGradient id="mRailF" gradientUnits="userSpaceOnUse" x1="1073" y1="566" x2="1069.900" y2="658"><stop offset="0" stop-color="#858a9e"/><stop offset=".56" stop-color="#858a9e"/><stop offset=".635" stop-color="#b7bcd5"/><stop offset=".72" stop-color="#a0a5bc"/><stop offset="1" stop-color="#a0a5bc"/></linearGradient>
<polygon points="1073,566 1258,573.5 1460,581 1685,588.5 1858,594.4 1847,648 1845,659 1842,686 1744,682.4 1560,675.7 1100,659 1073,658" fill="url(#mRailF)" />
<polygon points="1858,594.4 1860,627 1851,628" fill="#a9aec6" />
<polygon points="842,595 1008,602 1008,620 842,613.5" fill="#858a9e" />
<polygon points="842,613.5 1008,620 1008,630 842,626" fill="#b0b5cd" />
<polygon points="800,560 1008,562 1008,602 842,595 800,600" fill="#a3a8bf" />
<path d="M1755,649 L1840,652.500 Q1846,653 1847,660 L1848.500,688 L1828,783 L1732,752 L1749,654 Q1750,649 1755,649Z" fill="#858a9e" />
<path d="M1832,652.500 L1840,652.500 Q1846,653 1847,660 L1848.500,688 L1828,783 L1820,772 L1832,690Z" fill="url(#mLegShade)" />
<polygon points="1008,562 1062,556 1067,634 1049,638 1008,630" fill="#a0a5bc" />
<linearGradient id="mLegB" gradientUnits="userSpaceOnUse" x1="1060" y1="0" x2="1087" y2="0"><stop offset="0" stop-color="#858a9e"/><stop offset=".4" stop-color="#7c8194"/><stop offset=".8" stop-color="#3a3c48"/><stop offset="1" stop-color="#32343e"/></linearGradient>
<path d="M1050,640 L1070,626 Q1078,623 1084,625.500 L1087,634 L1088,658 L1077,729 L1065,728.500 L1053,722Z" fill="url(#mLegB)" />
<polygon points="1043.6,636 1050,640 1053.7,722 1048,747.5 1044,680" fill="#32343e" />
<path d="M748,623.600 L1039,631.800 Q1046,633 1049,640 L1043,669.700 L738,659.700 L742,628 Q743,623.600 748,623.600Z" fill="#858a9e" />
<polygon points="738,659.7 1043,669.7 1043,677 975,675 851,671 803.8,668" fill="#a0a5bc" />
<polygon points="738,659.7 803.8,667.7 805.8,701.6 748,703.6 743,736.5" fill="#a0a5bc" />
<polygon points="740,661.7 750,664 752,699.6 743,736.5" fill="#32343e" />
<linearGradient id="mLegA" gradientUnits="userSpaceOnUse" x1="812" y1="0" x2="848" y2="0"><stop offset="0" stop-color="#858a9e"/><stop offset=".45" stop-color="#7c8194"/><stop offset=".8" stop-color="#3a3c48"/><stop offset="1" stop-color="#32343e"/></linearGradient>
<polygon points="803.8,667.7 851.7,670.7 842.7,721.5 748,717 748,703.6 805.8,701.6" fill="url(#mLegA)" />
<polygon points="981.3,675.6 1043,675.6 1047,745.5 1041,725.5 973.3,724.5" fill="#a0a5bc" />
<polygon points="993,677 1041,677 1040,712 994,710" fill="#9a9fb6" />
<polygon points="1175,550 1235,550 1223,657.4 1156,655.7" fill="#858a9e" />
<polygon points="1235,550 1251,543 1234,655 1225,655" fill="#32343e" />
<polygon points="1156,655.7 1223,657.4 1222,662 1156.5,661" fill="#b9bed7" />
<polygon points="1156.5,661 1222,662 1218,686 1153,684" fill="#858a9e" />
<polygon points="1153,684 1218,686 1217.5,691 1152.5,690" fill="#b9bed7" />
<polygon points="1470,585 1518,585 1511.7,679 1455.5,674" fill="#858a9e" />
<polygon points="1547,586 1557,587 1551,637" fill="#32343e" />
<polygon points="1600,587 1667,577 1649,675.7 1585,680.8" fill="#858a9e" />
<linearGradient id="mRailN" gradientUnits="userSpaceOnUse" x1="737.700" y1="718.400" x2="734.600" y2="810.400"><stop offset="0" stop-color="#858a9e"/><stop offset=".565" stop-color="#858a9e"/><stop offset=".635" stop-color="#b7bcd5"/><stop offset=".71" stop-color="#a0a5bc"/><stop offset="1" stop-color="#a0a5bc"/></linearGradient>
<polygon points="737.7,718.4 1000,726.8 1320,738.6 1531.7,746.5 1826.6,756.4 1819.6,807.9 1819.6,848.4 1500,836.6 1320,830.8 1016.8,820 729.4,810 727.7,784 727.7,772" fill="url(#mRailN)" />
<polygon points="743,718 750,718 744,740" fill="#32343e" />
<polygon points="1043.6,728 1053.7,728.5 1048,747.5" fill="#32343e" />
<polygon points="953,813 1017.5,815.4 1011.6,853.5 1004.4,859.3 951.6,857.7 947.4,850" fill="#858a9e" />
<polygon points="947.4,850 1011.6,853.5 1004.4,859.3 951.6,857.7" fill="#aab0c8" />
<polygon points="1011.6,853.5 1004.4,859.3 1005,853.2" fill="#5c6070" />
<ellipse cx="981.8" cy="834.2" rx="11.7" ry="7.2" fill="#6a6e80" />
<ellipse cx="981.8" cy="835.6" rx="10.8" ry="6" fill="#f7f7f7" />
<polygon points="1530.7,834.6 1595,836.6 1589,875 1583,879.7 1529.7,878 1524.7,870" fill="#858a9e" />
<polygon points="1524.7,870 1589,875 1583,879.7 1529.7,878" fill="#aab0c8" />
<polygon points="1589,875 1583,879.7 1583.5,874.6" fill="#5c6070" />
<ellipse cx="1559.4" cy="855" rx="11.3" ry="7.2" fill="#6a6e80" />
<ellipse cx="1559.4" cy="856.4" rx="10.4" ry="6" fill="#f7f7f7" />
<path d="M1152.500,690 L1217.500,691 L1218.500,772 L1158,769.600 Q1153,769 1152.500,764Z" fill="#a0a5bc" />
<linearGradient id="mLegD" gradientUnits="userSpaceOnUse" x1="1512" y1="0" x2="1534" y2="0"><stop offset="0" stop-color="#858a9e"/><stop offset=".5" stop-color="#4a4d5a"/><stop offset="1" stop-color="#32343e"/></linearGradient>
<polygon points="1515,580 1545,580 1533,670 1531,728 1527,780 1523,780 1518.4,687.5 1511.7,679" fill="url(#mLegD)" />
<path d="M1455.500,674 L1511.700,679 L1525,778 Q1525,781 1521,781 L1464,779 Q1460,779 1459.700,775Z" fill="#a0a5bc" />
<polygon points="1455.5,674 1511.7,679 1512.8,688 1456,683" fill="#b9bed7" />
<path d="M1585,680.800 L1649,677.400 L1653.400,786 L1596,783 Q1590.500,783 1590,777Z" fill="#a0a5bc" />
<polygon points="1585,680.8 1649,677.4 1649.5,687 1585.5,690" fill="#b9bed7" />
<g>
<path d="M838,392 L861,388 L861,510 L838,510Z" fill="#c3c4da" />
<path d="M731.500,360.600 C712,385 711,520 724,572.700 L752,572.700 C762,560 762,520 760,509.700 L763,392 C760,374 752,362 745,361Z" fill="#cfcfea" />
<path d="M748,366 C735,395 733,535 744,571 L752,572.700 C762,560 762,520 760,509.700 L763,392 C760,378 754,368 750,366Z" fill="#c6c6d8" />
<path d="M752,384 C745,420 745,520 752,560 C757,520 757,420 752,384Z" fill="#d6d6e4" />
<path d="M741,372 C731,400 729,535 739,571" fill="none" stroke="#dcdcf0" stroke-width="1" fill-opacity="0"/>
<polygon points="762,411 791,411 791,510 762,510" fill="#dcdcec" />
</g>
<linearGradient id="mNeck" gradientUnits="userSpaceOnUse" x1="791" y1="0" x2="841" y2="0"><stop offset="0" stop-color="#c6c7e2"/><stop offset=".35" stop-color="#d2d3ee"/><stop offset="1" stop-color="#c9cae6"/></linearGradient>
<path d="M791,390 L840.600,390 L840.600,510 L791,510Z" fill="url(#mNeck)" />
<path d="M758,510 L1062,510 L1066,552 L1066,628 L758,622Z" fill="#a5aac1" fill-opacity=".93"/>
<path d="M861,372 Q880,362 906,359.600 L918,360 L908,433 L908,520 L861,520Z" fill="#c3e5ca" />
<path d="M861,372 Q866,368 872,366 L868,433 L868,520 L861,520Z" fill="#b4d8bc" />
<path d="M868,395 L908,400 L908,402 L868,397Z" fill="#b0d2b8" />
<polygon points="919,357 934.8,357 925.4,433 923,520 908,520 907.8,433" fill="#e1e1e1" />
<polygon points="908,520 923,520 934,596 924,600" fill="#c9cccf" fill-opacity=".5"/>
<polygon points="935.5,366.5 943,366.5 944,377 934,377" fill="#d6d6d6" />
<polygon points="928.5,377 961.9,378.5 992,404.3 992,412.5 995.8,430.7 925,433" fill="#e6e6e6" />
<polygon points="935.5,391 955.6,392 955.6,404.3 936.5,403.5" fill="#d4d4d4" />
<path d="M980.700,394.200 L1052.400,398.600 L1067.500,403 L1073.800,408 L1236,420.400 L1240,426 L1240,550 L1076,547 L1076,515 L924,515 L925.400,433 L995.800,430.700Z" fill="url(#mHouse)" />
<polygon points="1052.4,398.6 1067.5,403 1073.8,408 1066,420 1049,434" fill="#d9d9d9" />
<polygon points="961.9,378.5 992,404.3 992,412.5 960.6,385.4" fill="#b9b9b9" />
<polygon points="1076,541 1176,545 1176,550 1076,547" fill="#cfcfcf" />
<polygon points="1180,511 1229,511 1229,550 1172,550" fill="#a2a5b7" />
<path d="M779,420.500 L790,421 C799,432 800,500 790,517 L779,517 C766,505 766,432 779,420.500Z" fill="#c9ba3d" />
<path d="M786,421 L790,421 C799,432 800,500 790,517 L786,517 C794,500 794,435 786,421Z" fill="#b3a530" />
<path d="M783,422 C776,440 776,500 783,516" fill="none" stroke="#a89a2c" stroke-width=".8" stroke-dasharray="4 2" fill-opacity="0"/>
<polygon points="791,459 851,462 851,483 791,481" fill="url(#mThread)" />
<polygon points="792,458 793.3,458 793.3,482 792,482" fill="#2d2d4e" />
<polygon points="794.7,458 796,458 796,482 794.7,482" fill="#2d2d4e" />
<polygon points="797.4,458 798.7,458 798.7,482 797.4,482" fill="#2d2d4e" />
<polygon points="800.1,458 801.4,458 801.4,482 800.1,482" fill="#2d2d4e" />
<polygon points="802.8,458 804.1,458 804.1,482 802.8,482" fill="#2d2d4e" />
<polygon points="805.5,458 806.8,458 806.8,482 805.5,482" fill="#2d2d4e" />
<polygon points="808.2,458 809.5,458 809.5,482 808.2,482" fill="#2d2d4e" />
<polygon points="810.9,458 812.2,458 812.2,482 810.9,482" fill="#2d2d4e" />
<polygon points="813.6,458 814.9,458 814.9,482 813.6,482" fill="#2d2d4e" />
<path d="M862,423 L873,423.500 C883,435 884,505 873,520.600 L862,520.600 C849,508 849,436 862,423Z" fill="#c8d724" />
<path d="M869,423.500 L873,423.500 C883,435 884,505 873,520.600 L869,520.600 C878,505 878,438 869,423.500Z" fill="#aebd18" />
<path d="M866,424 C858,445 858,500 866,520" fill="none" stroke="#9aa810" stroke-width="1" fill-opacity="0"/>
<path d="M870,424 C863,445 863,500 870,520" fill="none" stroke="#a3b114" stroke-width=".8" stroke-dasharray="4 2" fill-opacity="0"/>
<polygon points="878,443.5 892,444 892,504 878,503" fill="#a6ccb2" />
<path d="M896,431 C886,440 886,506 896,515 L909,515 L909,431Z" fill="#4d724b" />
<polygon points="909,432 916,433 916,514 909,515" fill="#8b8b8b" />
<polygon points="916,433 928,435 928,512 916,514" fill="#bab1a5" />
<ellipse cx="921" cy="470" rx="2" ry="2.5" fill="#e8e8e8" />
<polygon points="928,434 940,434 940,514 928,513" fill="#9a9a9a" />
<path d="M944,432.600 C936,440 936,508 944,516 L955,516 L955,432.600Z" fill="#4e7552" />
<polygon points="955,433 960,434 960,516 955,516" fill="#8db3a4" />
<polygon points="959,434 976,434 972,518 959,517" fill="#a3a9b9" />
<path d="M984.400,423.100 L994.800,424.600 C986,445 981,480 979.200,527 L968,526.800 C969,490 975,445 984.400,423.100Z" fill="url(#mRing)" />
<path d="M994.800,424.600 L996,447 L998,505 L989,516.300 L979.200,527 C981,480 986,445 994.800,424.600Z" fill="#30333e" />
<linearGradient id="mCollar" gradientUnits="userSpaceOnUse" x1="0" y1="447" x2="0" y2="506"><stop offset="0" stop-color="#c9cdd0"/><stop offset=".3" stop-color="#e6e9ec"/><stop offset=".7" stop-color="#cfd3d6"/><stop offset="1" stop-color="#90959b"/></linearGradient>
<path d="M987,447.700 L997,448.500 L997,506 L985,505 C982,490 983,460 987,447.700Z" fill="url(#mCollar)" />
<path d="M995.500,448.300 L998.600,450 L998.600,504 L995.500,506Z" fill="#44464e" />
<polygon points="996,456 1047,459 1047,498.6 996,497" fill="url(#mShaftK)" />
<path d="M1056,417 C1044,430 1044,540 1056,566 L1068,566 C1079,540 1079,440 1068,417Z" fill="#b4bccd" />
<path d="M1056,417 C1044,430 1044,540 1056,566 L1061,566 C1050,540 1050,432 1061,417Z" fill="#cbd5e8" />
<path d="M1066,430 C1058,450 1058,530 1066,556 C1074,530 1074,450 1066,430Z" fill="#dfe3ea" />
<path d="M1064,424 C1054,445 1054,535 1064,560" fill="none" stroke="#8e95a6" stroke-width="1" fill-opacity="0"/>
<path d="M1070,432 C1078,455 1078,530 1070,552" fill="none" stroke="#9aa1b2" stroke-width="1.200" fill-opacity="0"/>
<ellipse cx="1057" cy="431" rx="2" ry="1.5" fill="#8e95a6" />
<polygon points="1067,457 1093,457 1093,501 1067,501" fill="#7e7e7e" />
<polygon points="1093,452 1214,456 1214,512.6 1093,508.4" fill="url(#mShaftG)" />
<polygon points="1214,461.5 1228,462 1228,506.8 1214,506.8" fill="#808080" />
<path d="M1240,423 C1226,440 1226,530 1237,556 L1249,556 C1260,530 1262,440 1252,423Z" fill="#c4cde0" />
<path d="M1240,423 C1226,440 1226,530 1237,556 L1240,556 C1231,530 1231,440 1243,423Z" fill="#d3dcee" />
<path d="M1246,423 L1252,423 C1262,440 1260,530 1249,556 L1243,556 C1253,530 1254,440 1246,423Z" fill="#3a3e4b" />
<path d="M1244,436 C1238,460 1238,520 1243,548" fill="none" stroke="#9aa2b4" stroke-width="1" fill-opacity="0"/>
<ellipse cx="1243" cy="437" rx="2.2" ry="1.6" fill="#8e95a6" />
<polygon points="1240,556 1250,556 1238,600 1232,600" fill="#3a3e4b" />
<path d="M1429.700,425 Q1433,420 1436,424 C1440,440 1444,520 1445.600,580 L1450.500,580 L1451,607.700 L1427,607 L1423,526 L1424.600,455 Q1426,435 1429.700,425Z" fill="#c8a129" />
<path d="M1263.500,415 L1433,421.500 Q1428,430 1426,455 L1424,526 L1427,607 L1430.400,689 L1263.500,684 L1258.400,580 L1256,500 L1257,440 Q1258,418 1263.500,415Z" fill="url(#mGuard)" />
<polygon points="1263.5,684 1430.4,690.7 1430,695 1263,688.5" fill="#d4ab2b" />
<path d="M1263,688.500 L1430,695 L1425,726 L1417.800,731.800 L1262.600,726 L1258.400,721Z" fill="#9e7f20" />
<polygon points="1258.4,721 1262.6,726 1417.8,731.8 1425,726" fill="#d2a92b" />
<ellipse cx="1343" cy="710" rx="3.2" ry="1.8" fill="#d8b030" />
<polygon points="1292,728 1303,728.5 1297,760" fill="#32343e" />
<polygon points="1291,728 1294,728 1296,760 1293,760" fill="#a0a5bc" />
<polygon points="1384,731 1396,731.5 1390,764" fill="#32343e" />
<polygon points="1383,731 1386,731 1389,764 1386,764" fill="#a0a5bc" />
<linearGradient id="mMS" gradientUnits="userSpaceOnUse" x1="0" y1="477" x2="0" y2="507"><stop offset="0" stop-color="#8c857d"/><stop offset=".4" stop-color="#aaa39b"/><stop offset="1" stop-color="#8e8881"/></linearGradient>
<polygon points="1423,477 1442,478 1442,508 1423,507" fill="url(#mMS)" />
<polygon points="1422,455 1425,455 1424.5,526 1422,526" fill="#2c3350" />
<path d="M762,510 L861,510 L866,585 Q850,600 815,597 L790,560 Q770,540 762,510Z" fill="#7d81b6" fill-opacity=".85"/>
<path d="M800,515 C790,540 795,580 812,596 L830,598 C812,580 808,540 818,515Z" fill="#8b8fc0" fill-opacity=".8"/>
<path d="M861,520 L908,520 L926,584 Q890,600 868,590Z" fill="#8bb0a0" />
<path d="M866,540 C866,570 872,590 880,594 L888,592 C880,580 876,560 876,540Z" fill="#7fa594" />
<ellipse cx="797.5" cy="528.4" rx="8.5" ry="5" fill="#e4e4f4" />
<ellipse cx="887" cy="531" rx="8.5" ry="5" fill="#dff0e2" />
<clipPath id="cLow"><rect x="760" y="508" width="130" height="20"/></clipPath>
<g clip-path="url(#cLow)">
<path d="M779,420.500 L790,421 C799,432 800,500 790,517 L779,517 C766,505 766,432 779,420.500Z" fill="#b9ab3a" />
<path d="M786,421 L790,421 C799,432 800,500 790,517 L786,517 C794,500 794,435 786,421Z" fill="#a4972e" />
<path d="M862,423 L873,423.500 C883,435 884,505 873,520.600 L862,520.600 C849,508 849,436 862,423Z" fill="#c0cf22" />
<path d="M869,423.500 L873,423.500 C883,435 884,505 873,520.600 L869,520.600 C878,505 878,438 869,423.500Z" fill="#a5b416" />
</g>
<linearGradient id="mBand" gradientUnits="userSpaceOnUse" x1="900" y1="541" x2="899.500" y2="563"><stop offset="0" stop-color="#fff" stop-opacity="0"/><stop offset=".35" stop-color="#fff" stop-opacity=".8"/><stop offset=".6" stop-color="#fff" stop-opacity=".8"/><stop offset="1" stop-color="#fff" stop-opacity="0"/></linearGradient>
<polygon points="760,538 1062,546 1066,565 762,558.5" fill="url(#mBand)" />
<polygon points="762,545 800,546 800,553 762,552" fill="#ffffff" fill-opacity=".8"/>
<path d="M763.700,552 L816,595" fill="none" stroke="#3a3c48" stroke-width="1" fill-opacity="0"/>
<path d="M758,548 l6,-4 l0,10z" fill="#32343e" />
<linearGradient id="mLegC" gradientUnits="userSpaceOnUse" x1="1058" y1="0" x2="1075" y2="0"><stop offset="0" stop-color="#a0a5bc"/><stop offset=".55" stop-color="#777b8d"/><stop offset="1" stop-color="#3a3c48"/></linearGradient>
<path d="M1058,552 L1067,546 L1074,552 L1076,600 L1072,636 L1064,637 L1062,600Z" fill="url(#mLegC)" />
<polygon points="842,596 1008,603 1008,620 842,613" fill="#858a9e" />
<path d="M793.700,580 L840.600,580 L840.600,621 L793.700,621Z" fill="#8e92c8" fill-opacity=".9"/>
<path d="M818,594 L840.600,594 L840.600,621 L818,621Z" fill="#7b7fb6" />
<path d="M755,614 Q756,608 762,608 L793.700,608 L793.700,621 L840.600,621 L840.600,612 L880,612 Q886,613 886,619 L885,650 L876,660.600 L762,656 Q755,655 755,648Z" fill="#7478ac" fill-opacity=".92"/>
<path d="M760,610 L792,609 L792,626 L770,628 L760,624Z" fill="#8c90c2" fill-opacity=".8"/>
<path d="M842,614 L884,614 L884,634 L850,636 L842,630Z" fill="#8c90c2" fill-opacity=".8"/>
<path d="M840.600,594 L840.600,660" fill="none" stroke="#5e628f" stroke-width="1" fill-opacity="0"/>
<ellipse cx="777" cy="639" rx="8.5" ry="5.2" fill="#9da1cf" />
<ellipse cx="777" cy="638" rx="6.5" ry="3.6" fill="#6468a0" />
<ellipse cx="867" cy="642" rx="8.5" ry="5.2" fill="#9da1cf" />
<ellipse cx="867" cy="641" rx="6.5" ry="3.6" fill="#6468a0" />
<path d="M885,650 L876,660.600 L878,648Z" fill="#8c90c2" />
<path d="M729,327 A90,51 -2 0 0 909,323 L909.600,345 A90,51 -2 0 1 730.500,350Z" fill="#c8c9e4" />
<path d="M729,327 L730.500,350 A90,51 -2 0 0 909.600,345 L909,323Z" fill="#c8c9e4" />
<ellipse cx="819" cy="348" rx="90" ry="51" fill="#c8c9e4" transform="rotate(-2 819 348)" />
<linearGradient id="mRim" gradientUnits="userSpaceOnUse" x1="800" y1="0" x2="910" y2="0"><stop offset="0" stop-color="#cbcce9" stop-opacity="0"/><stop offset="1" stop-color="#b9bace"/></linearGradient>
<ellipse cx="819" cy="348" rx="90" ry="51" fill="url(#mRim)" transform="rotate(-2 819 348)" />
<polygon points="880,323 909,323 909.6,345 880,345" fill="url(#mRim)" />
<ellipse cx="819" cy="325.2" rx="90" ry="51" fill="#c1c2d8" transform="rotate(-2 819 325.2)" />
<linearGradient id="mHole" x1="0" y1="0" x2="1" y2="0"><stop offset="0" stop-color="#b4b5ca"/><stop offset=".6" stop-color="#cfd0ea"/><stop offset="1" stop-color="#d4d5f0"/></linearGradient>
<ellipse cx="778" cy="300.5" rx="12" ry="7.6" fill="url(#mHole)" />
<path d="M770,305.0 Q778,310.0 786,305.0 Q778,307.5 770,305.0Z" fill="#f2f2fa" />
<ellipse cx="868.6" cy="304" rx="12" ry="7.6" fill="url(#mHole)" />
<path d="M860.6,308.5 Q868.6,313.5 876.6,308.5 Q868.6,311 860.6,308.5Z" fill="#f2f2fa" />
<ellipse cx="768" cy="356.5" rx="12" ry="7.6" fill="url(#mHole)" />
<path d="M760,361.0 Q768,366.0 776,361.0 Q768,363.5 760,361.0Z" fill="#f2f2fa" />
<ellipse cx="858.5" cy="360" rx="12" ry="7.6" fill="url(#mHole)" />
<path d="M850.5,364.5 Q858.5,369.5 866.5,364.5 Q858.5,367 850.5,364.5Z" fill="#f2f2fa" />
<linearGradient id="mBore" x1="0" y1="0" x2="1" y2="0"><stop offset="0" stop-color="#b9bad0"/><stop offset=".7" stop-color="#cccdea"/><stop offset="1" stop-color="#c6c7e2"/></linearGradient>
<ellipse cx="818.2" cy="328" rx="21.5" ry="13.6" fill="url(#mBore)" transform="rotate(-2 818.2 328)" />
<path d="M770,337 Q800,372 850,358 Q866,350 868,330" fill="none" stroke="#d6d7ec" stroke-width="1.200" fill-opacity="0"/>
<path d="M771,339 Q800,374 851,360 Q867,352 869,332" fill="none" stroke="#b9bad2" stroke-width=".8" fill-opacity="0"/>
<polygon points="1664,573 1685,574 1685,607 1662,606" fill="#a0a5bc" />
<polygon points="1473.7,578 1513,579 1513,600.5 1474,600.5" fill="#babed5" />
<polygon points="1474,600.5 1513,600.5 1513,631.5 1475,631.5" fill="#a8861f" />
<polygon points="1602,585 1640.5,586 1640.5,605 1602.8,605" fill="#babed5" />
<polygon points="1602.8,605 1641,605 1642,635.5 1603,635.5" fill="#a0a5bc" />
<ellipse cx="1491" cy="643" rx="4.5" ry="4" fill="#b5bad0" />
<ellipse cx="1490" cy="642" rx="3" ry="2.6" fill="#70748a" />
<ellipse cx="1619" cy="646" rx="4.5" ry="4" fill="#b5bad0" />
<ellipse cx="1618" cy="645" rx="3" ry="2.6" fill="#70748a" />
<path d="M1476,655 l3,3 l8,0 l0,-3z M1497,657 l12,0 l2,-4 l-12,1z" fill="#aeb3ca" />
<path d="M1601,659 l3,3 l8,0 l0,-3z M1623,661 l12,0 l2,-4 l-12,1z" fill="#aeb3ca" />
<path d="M1663,430 L1697,431 Q1706,470 1706,500 Q1706,540 1696,572 L1668,573Z" fill="url(#mFan)" />
<ellipse cx="1698" cy="501" rx="7.5" ry="69" fill="#33343e" />
<path d="M1699,440 Q1704,470 1704,500 Q1704,520 1702,540 Q1698,500 1699,440Z" fill="#8b90a6" />
<path d="M1695,540 Q1692,555 1694,568 Q1700,555 1701,535Z" fill="#6f7386" />
<path d="M1660,423 L1672,423.500 Q1680,426 1678,432 C1664,470 1664,540 1674,575 L1664,577 C1648,545 1646,470 1660,423Z" fill="url(#mBell)" />
<path d="M1672,423.500 Q1680,426 1678,432 C1670,450 1667,470 1666,500 C1667,470 1668,445 1672,423.500Z" fill="#4c4f5c" />
<clipPath id="cBody"><path d="M1462,404 L1661.500,410 L1665,414 L1653,470 L1650,500 L1653,585.400 L1460,579.500 L1455,540 L1454,480 L1457,430Z"/></clipPath>
<g clip-path="url(#cBody)">
<polygon points="1440,395 1680,395 1680,600 1440,600" fill="url(#finsA)" />
<polygon points="1440,488 1680,496 1680,600 1440,600" fill="url(#finsB)" />
<polygon points="1440,479.5 1680,487.5 1680,496 1440,488" fill="#b6bbd2" />
<polygon points="1440,560 1680,568 1680,600 1440,600" fill="#9da2b9" fill-opacity=".75"/>
<polygon points="1440,395 1680,395 1680,420 1440,412" fill="#a1a6bc" fill-opacity=".6"/>
<polygon points="1454,400 1471,400 1469,484 1454,484" fill="#a3a8be" />
</g>
<path d="M1452,433 C1438,450 1438,530 1448,552 L1462,560 L1462,425Z" fill="#b3b8cd" />
<path d="M1452,433 C1438,450 1438,530 1448,552 L1451,553 C1443,530 1443,455 1455,433Z" fill="#c3c8dc" />
<path d="M1457,425 L1462,421 L1462,585 L1460,579.500 L1455,540 L1454,480Z" fill="#a7acc2" />
<polygon points="1464.4,447 1529,450.6 1527,484 1470,484" fill="#a2a7bd" />
<polygon points="1477,376 1542,378 1529,450.6 1464.4,447" fill="#a4a9bf" />
<polygon points="1483,380 1536,382 1524,446 1470.5,443" fill="#b0b5c9" />
<polygon points="1485,383 1534,385 1529,411 1524,440 1474,437" fill="#868b9f" />
<polygon points="1474,437 1524,440 1522.5,446 1470.5,443" fill="#b3b8cc" />
<polygon points="1529,411 1534,385 1536,382 1524,446 1522.5,446 1524,440" fill="#8f94a9" />
<polygon points="1529,450.6 1542,378 1544,380 1531,452" fill="#767a8c" />
<polygon points="1527,452 1530,452 1528.5,484 1526.5,484" fill="#5b5e6c" />
<ellipse cx="1486" cy="463.5" rx="11.5" ry="8" fill="#b9bed4" transform="rotate(20 1486 463.5)" />
<ellipse cx="1485" cy="464.5" rx="10" ry="7" fill="#a2a7bd" transform="rotate(20 1485 464.5)" />
<ellipse cx="1483.5" cy="466" rx="5.5" ry="3.8" fill="#7b8094" transform="rotate(15 1483.5 466)" />
<ellipse cx="1513" cy="463.5" rx="11.5" ry="8" fill="#b9bed4" transform="rotate(20 1513 463.5)" />
<ellipse cx="1512" cy="464.5" rx="10" ry="7" fill="#a2a7bd" transform="rotate(20 1512 464.5)" />
<ellipse cx="1510.5" cy="466" rx="5.5" ry="3.8" fill="#7b8094" transform="rotate(15 1510.5 466)" />
<g>
<linearGradient id="tRed" x1="0" y1="0" x2="0" y2="1"><stop offset="0" stop-color="#e03030"/><stop offset=".5" stop-color="#c02020"/><stop offset="1" stop-color="#6e1010"/></linearGradient>
<radialGradient id="tCy" cx=".4" cy=".35" r=".7"><stop offset="0" stop-color="#b8f4fa"/><stop offset="1" stop-color="#6fd0dc"/></radialGradient>
<path d="M436,939 L444.500,939 L443,955 L441,962 L439,971 L435.500,971 L437.500,962 L433,963 L436.500,952Z" fill="#0a10e0" />
<path d="M440.100,902 L444.500,910 L444.200,940 L438.300,940 L438.300,912 L437,910Z" fill="#12b81a" />
<path d="M441.500,906 L444.500,910 L444.200,940 L442.500,940Z" fill="#0c8a12" />
<linearGradient id="tRedV" x1="0" y1="0" x2="1" y2="0"><stop offset="0" stop-color="#b01818"/><stop offset=".4" stop-color="#f04040"/><stop offset="1" stop-color="#b01818"/></linearGradient>
<path d="M437.300,921 L442,921 L442,954.600 L437.300,954.600Z" fill="url(#tRedV)" />
<path d="M417.300,937 A21.500,17 0 0 1 438.700,920" fill="none" stroke="#1414e8" stroke-width="3.400" fill-opacity="0" stroke-linecap="round"/>
<path d="M417.300,940.500 A20,14.500 0 0 0 437.300,954.600" fill="none" stroke="#18c020" stroke-width="3.400" fill-opacity="0" stroke-linecap="round"/>
<path d="M393,938.500 L402,936.300 L437.800,936.300 L437.800,942.500 L402,942 L403,943.500Z" fill="url(#tRed)" />
<ellipse cx="404.7" cy="933.1" rx="6.2" ry="6.2" fill="url(#tCy)" fill-opacity=".9"/>
<path d="M400,938 L409,938 L409,940.500 L400,940Z" fill="#8a6a6a" fill-opacity=".5"/>
<text x="390" y="939.500" font-family="Liberation Sans,sans-serif" font-size="10.500" fill="#ee1c1c">Z</text>
<text x="436.500" y="899.500" font-family="Liberation Sans,sans-serif" font-size="9.500" fill="#10e010">Y</text>
</g>
</svg>
<!-- ===== status + taskbar ===== -->
<div id="status" class="abs">就绪</div>
<div id="taskbar" class="abs">
  <svg width="1920" height="43" viewBox="0 0 1920 43" style="position:absolute;left:0;top:0">
    <defs>
      <linearGradient id="tOr" x1="0" y1="0" x2="0" y2="1"><stop offset="0" stop-color="#ffb534"/><stop offset="1" stop-color="#ff9a1f"/></linearGradient>
      <linearGradient id="tGr" x1="0" y1="0" x2="0" y2="1"><stop offset="0" stop-color="#2ee0a0"/><stop offset="1" stop-color="#12b877"/></linearGradient>
      <linearGradient id="tTm" x1="0" y1="0" x2="0" y2="1"><stop offset="0" stop-color="#3a3a3a"/><stop offset="1" stop-color="#0c0c0c"/></linearGradient>
      <linearGradient id="tAs" x1="0" y1="0" x2="1" y2="1"><stop offset="0" stop-color="#0a49a8"/><stop offset="1" stop-color="#1668e0"/></linearGradient>
      <filter id="bl"><feGaussianBlur stdDeviation=".4"/></filter>
    </defs>
    <rect x="0" y="41.500" width="1920" height="1.500" fill="#0a0a0a"/>
    <g filter="url(#bl)">
    <!-- tiles -->
    <rect x="357" y="1" width="46" height="41" rx="4" fill="#272727"/><rect x="406" y="1" width="46" height="41" rx="4" fill="#272727"/>
    <rect x="454" y="1" width="46" height="41" rx="4" fill="#272727"/><rect x="503" y="1" width="46" height="41" rx="4" fill="#272727"/>
    <rect x="552" y="1" width="45" height="42" rx="4" fill="#3c3c3c"/>
    <rect x="357" y="2" width="10" height="3" rx="1.500" fill="#3d8bf0"/><rect x="455" y="2" width="10" height="3" rx="1.500" fill="#3d8bf0"/>
    <!-- launcher -->
    <circle cx="21" cy="22" r="14" fill="#e4e6ee"/>
    <path d="M28 14.500c-6 1-11 5-14 11c2-1 4-1.500 5-1.500c-1 2-1.500 4-1 6c2-4 6-6 10-6c-3-1-5-1-7 0c2-4 4-7 7-9.500z" fill="#2a8af0"/><path d="M14 14l4 1l-3 3.500z" fill="#f0533c"/>
    <!-- multitask -->
    <rect x="68" y="12" width="22" height="14" rx="1.500" fill="#8a8a8a"/><rect x="61" y="18" width="22" height="14" rx="1.500" fill="#f2f2f2"/>
    <!-- archive orange -->
    <rect x="125" y="9" width="26" height="27" rx="6" fill="url(#tOr)"/><circle cx="138" cy="15.500" r="1.600" fill="#ffe9c4"/><circle cx="138" cy="30" r="1.900" fill="#fff3dc"/><path d="M138 18v9" stroke="#ffd79a" stroke-width="1" stroke-dasharray="1.500 1.500"/>
    <!-- browser -->
    <circle cx="186" cy="22" r="14.500" fill="#2d7be0"/><path d="M176 14c3-4 9-4 12-3l4 3c3 1 3 5 1 7l-5 1c-1 2 0 4 2 5c-1 4-5 6-10 5c-5-1-8-5-7-10c0-3 1-6 3-8z" fill="#ffd21e"/><circle cx="186" cy="22" r="14.500" fill="none" stroke="#1f5fc0" stroke-width="1.500"/>
    <!-- wps -->
    <rect x="220" y="8" width="28" height="28" rx="2" fill="#1e7be6"/><path d="M225 17l4 10l3.500-7l3.500 7l3-10h5" fill="none" stroke="#a9d2ff" stroke-width="1.300"/>
    <!-- store -->
    <rect x="270" y="9" width="26" height="27" rx="6" fill="url(#tGr)"/><path d="M277 14c1 4 11 4 12 0" fill="none" stroke="#e4fff4" stroke-width="1.300"/>
    <!-- term 1 -->
    <rect x="318" y="9" width="27" height="27" rx="7" fill="url(#tTm)" stroke="#5a5a5a" stroke-width=".8"/><path d="M325 18l3.500 2l-3.500 2" fill="none" stroke="#2fbf6e" stroke-width="1.200"/><path d="M330 24h4" stroke="#2fbf6e" stroke-width="1.200"/>
    <!-- archive orange 2 -->
    <rect x="367" y="9" width="26" height="27" rx="6" fill="url(#tOr)"/><circle cx="380" cy="16" r="1.800" fill="#fff3dc"/><circle cx="380" cy="30" r="1.900" fill="#fff3dc"/><path d="M380 19v8" stroke="#ffd79a" stroke-width="1" stroke-dasharray="1.500 1.500"/>
    <!-- doc -->
    <rect x="418" y="8" width="22" height="28" rx="2" fill="#f7f7f7"/><rect x="421" y="14" width="6" height="7" fill="#f3b63a"/><path d="M423 15h2.500M424.200 15v5" stroke="#222" stroke-width="1.200"/><path d="M421 11h10M429 15h8M429 18h8M421 24h5M421 27h5M421 31h16" stroke="#d8dce6" stroke-width="1"/><rect x="429" y="23" width="8" height="4" fill="#fbe3a6"/><rect x="429" y="30" width="4" height="1.500" fill="#ee6a5a"/>
    <!-- term 2 -->
    <rect x="464" y="9" width="27" height="27" rx="7" fill="url(#tTm)" stroke="#5a5a5a" stroke-width=".8"/><path d="M471 18l3.500 2l-3.500 2" fill="none" stroke="#2fbf6e" stroke-width="1.200"/><path d="M476 24h4" stroke="#2fbf6e" stroke-width="1.200"/>
    <!-- settings -->
    <rect x="512" y="9" width="27" height="27" rx="7" fill="#555" stroke="#707070" stroke-width=".8"/>
    <g transform="translate(525.500,22.500)"><path d="M-2-9.500h4l.7 2.500l2.300 1l2.300-1.300l2.800 2.800l-1.300 2.300l1 2.300l2.500.7v4l-2.500.7l-1 2.300l1.300 2.300l-2.800 2.800l-2.300-1.300l-2.300 1l-.7 2.500h-4l-.7-2.500l-2.300-1l-2.300 1.300l-2.800-2.800l1.300-2.300l-1-2.300l-2.500-.7v-4l2.500-.7l1-2.300l-1.300-2.300l2.800-2.800l2.300 1.300l2.300-1z" transform="scale(.95) translate(0,1.500)" fill="#c9ccd4"/><circle r="5.500" fill="#2b2f6e"/><circle r="3" fill="#4a3aa8"/></g>
    <!-- AST -->
    <rect x="557" y="6" width="34" height="33" rx="2" fill="url(#tAs)"/>
    </g>
    <text x="562.500" y="27.500" font-family="Liberation Sans,sans-serif" font-weight="bold" font-size="11.500" fill="#f7d21c" filter="url(#bl)">A</text>
    <text x="570.500" y="27.500" font-family="Liberation Sans,sans-serif" font-weight="bold" font-size="11.500" fill="#fff" filter="url(#bl)">ST</text>
    <!-- tray -->
    <g fill="none" stroke="#b9b9b9" stroke-width="1.300" filter="url(#bl)">
      <circle cx="1597" cy="21.500" r="6.500"/><path d="M1601.500 26.500l2.500 2.500"/>
      <path d="M1627 17.500l4 4.500l-4 4.500" stroke="#9a9a9a"/>
      <path d="M1654 19h3l4-3.500v13l-4-3.500h-3z"/><path d="M1664.500 17.500q2.500 4 0 8.500" stroke="#777"/><path d="M1667.500 15.500q3.500 6 0 12.500" stroke="#555"/>
      <rect x="1688" y="18.500" width="10" height="8"/><path d="M1691 29h5M1693.500 26.500v2.500M1698 22h2.500v-5"/><rect x="1698.500" y="13.500" width="3" height="4" fill="#b9b9b9"/>
      <path d="M1720 15h13v10h-9.500l-2 2v-2h-1.500z"/>
      <rect x="1752" y="17" width="14" height="11" rx="1.500" fill="#a9a9a9" stroke="none"/>
    </g>
    <circle cx="1731.500" cy="15" r="2.600" fill="#f0381e"/>
    <text x="1754.500" y="26" font-family="Liberation Sans,sans-serif" font-size="8.500" fill="#1b1b1b" filter="url(#bl)">01</text>
    <!-- brightness -->
    <g transform="translate(1897,22.500)" filter="url(#bl)"><circle r="7.300" fill="#efefef"/><path d="M-6.500 0a6.500 6.500 0 0 0 9 6a7.500 7.500 0 0 1-5.500-9.500a6.500 6.500 0 0 0-3.500 3.500z" fill="#1b1b1b"/>
      <g stroke="#c9c9c9" stroke-width="1.300"><path d="M0-9.500v-2.500M0 9.500v2.500M-9.500 0h-2.500M9.500 0h2.500M-6.700-6.700l-1.800-1.800M6.700-6.700l1.800-1.800M-6.700 6.700l-1.800 1.800M6.700 6.700l1.800 1.800"/></g></g>
    <rect x="1916" y="0" width="1" height="43" fill="#3a3a3a"/>
  </svg>
  <div class="abs" style="left:1777px;top:6px;width:100px;text-align:center;font-size:12.500px;line-height:16px;color:#a6a6a6;white-space:nowrap;letter-spacing:-.3px;filter:blur(.35px)">13:43 周三</div>
  <div class="abs" style="left:1777px;top:23px;width:100px;text-align:center;font-size:12.500px;line-height:16px;color:#a6a6a6;white-space:nowrap;letter-spacing:-.3px;filter:blur(.35px)">2025/03/19</div>
</div>
</body>
</html>
